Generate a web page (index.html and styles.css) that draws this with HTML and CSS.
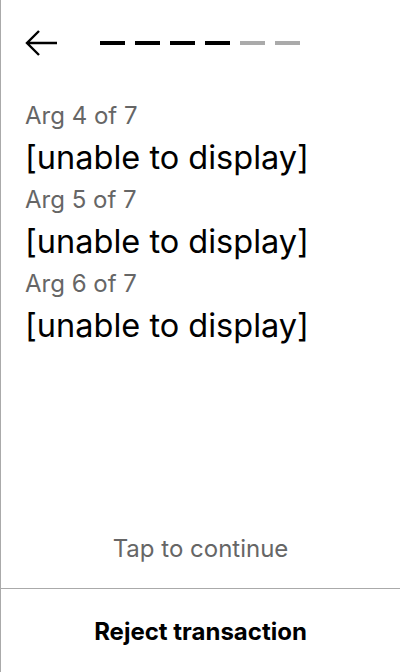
FILE: index.html
```html
<!DOCTYPE html>
<html>
<head>
<meta charset="utf-8">
<link rel="stylesheet" href="styles.css">
</head>
<body>
<div class="screen">
  <header class="topbar">
    <svg class="back" width="34" height="28" viewBox="0 0 34 28">
      <path d="M33 14 H3 M15 2 L3 14 L15 26" fill="none" stroke="#000" stroke-width="2.4"/>
    </svg>
    <div class="steps">
      <span class="step on"></span>
      <span class="step on"></span>
      <span class="step on"></span>
      <span class="step on"></span>
      <span class="step"></span>
      <span class="step"></span>
    </div>
  </header>
  <main class="args">
    <div class="arg">
      <div class="label">Arg 4 of 7</div>
      <div class="value">[unable to display]</div>
    </div>
    <div class="arg">
      <div class="label">Arg 5 of 7</div>
      <div class="value">[unable to display]</div>
    </div>
    <div class="arg">
      <div class="label">Arg 6 of 7</div>
      <div class="value">[unable to display]</div>
    </div>
  </main>
  <div class="tap">Tap to continue</div>
  <footer class="reject">Reject transaction</footer>
</div>
</body>
</html>
```
FILE: styles.css
```css
html, body {
  margin: 0;
  padding: 0;
  background: #fff;
}
body {
  font-family: Inter, "Noto Sans", sans-serif;
  color: #000;
}
.screen {
  width: 399px;
  height: 672px;
  border-left: 1px solid #aaa;
  display: flex;
  flex-direction: column;
}
.topbar {
  display: flex;
  align-items: center;
  height: 28px;
  padding: 29px 0 0 23px;
}
.back {
  display: block;
  margin-right: 42px;
}
.steps {
  display: flex;
  gap: 10px;
}
.step {
  width: 25px;
  height: 4px;
  background: #aaa;
}
.step.on {
  background: #000;
}
.args {
  padding: 38px 0 0 24px;
  flex: 1;
}
.label {
  font-size: 24px;
  line-height: 42px;
  height: 42px;
  color: #666;
}
.value {
  font-size: 32.5px;
  line-height: 42px;
  height: 42px;
  color: #000;
}
.tap {
  text-align: center;
  font-size: 24px;
  line-height: 42px;
  color: #666;
  padding-bottom: 18px;
}
.reject {
  border-top: 1px solid #aaa;
  height: 84px;
  display: flex;
  align-items: center;
  justify-content: center;
  font-size: 24px;
  font-weight: 700;
  padding-top: 1px;
  box-sizing: border-box;
}
```
